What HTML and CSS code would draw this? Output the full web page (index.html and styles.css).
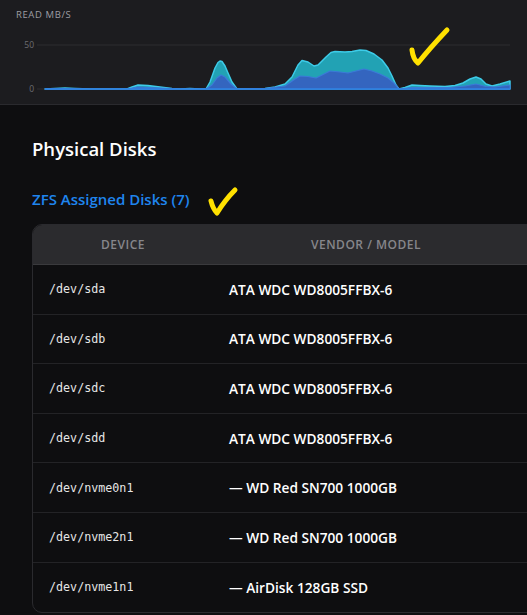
FILE: index.html
```html
<!DOCTYPE html>
<html lang="en">
<head>
    <meta charset="UTF-8">
    <meta name="viewport" content="width=device-width, initial-scale=1.0">
    <title>Physical Disks</title>
    <link rel="stylesheet" href="styles.css">
</head>
<body>
    <div class="chart-panel">
        <div class="chart-label">Read MB/s</div>
        <svg class="chart" viewBox="0 24 527 76" width="527" height="76">
            <line class="grid" x1="37" y1="45" x2="510" y2="45"/>
            <line class="grid" x1="37" y1="89" x2="45" y2="89"/>
            <text class="axis" x="34" y="48" text-anchor="end">50</text>
            <text class="axis" x="34" y="92" text-anchor="end">0</text>
            <!-- total -->
            <path class="area-total" d="M45,89 L55,88.5 L65,88 L75,88.5 L90,89 L127,89 L132,87 L138,85 L148,85.5 L160,87 L172,88.5 L180,89 L190,88.5 L200,89 L206,89 L210,82 L215,68 L218,62.5 L220,61 L222,61.5 L225,66 L228,73 L232,82 L237,89 L250,89 L265,88.5 L275,87 L285,84 L292,77 L298,65 L302,60.5 L308,62 L314,66 L318,65 L326,57 L331,52.5 L335,51.5 L345,52 L352,51.5 L360,50 L366,50.5 L374,54 L382,60 L388,68 L392,76 L396,85 L399,89 L405,87.5 L412,85 L420,85.5 L430,86 L445,86.5 L455,85.5 L463,83 L470,79 L476,77 L481,79 L486,84 L492,86 L500,84 L510,81 L510,89 Z"/>
            <!-- read -->
            <path class="area-read" d="M45,89 L60,88.5 L90,89 L127,89 L138,87 L160,88 L180,89 L206,89 L212,85 L217,78 L221,75 L225,77 L231,84 L237,89 L265,88.5 L285,86 L295,79 L300,76 L308,76.5 L316,78 L322,75 L330,71 L340,72 L348,73 L356,71 L364,69 L372,71 L380,74 L388,78 L394,83 L399,89 L412,87.5 L430,87.5 L450,87.5 L465,86 L476,84 L486,86.5 L495,87 L510,85 L510,89 Z"/>
            <line class="base" x1="45" y1="89" x2="510" y2="89"/>
        </svg>
    </div>

    <section class="disks">
        <h2>Physical Disks</h2>
        <h3>ZFS Assigned Disks (7)</h3>
        <div class="table-wrap">
            <table class="disk-table">
                <thead>
                    <tr>
                        <th class="col-device">Device</th>
                        <th class="col-model">Vendor / Model</th>
                        <th></th>
                    </tr>
                </thead>
                <tbody>
                    <tr><td class="dev">/dev/sda</td><td class="model">ATA WDC WD8005FFBX-6</td><td></td></tr>
                    <tr><td class="dev">/dev/sdb</td><td class="model">ATA WDC WD8005FFBX-6</td><td></td></tr>
                    <tr><td class="dev">/dev/sdc</td><td class="model">ATA WDC WD8005FFBX-6</td><td></td></tr>
                    <tr><td class="dev">/dev/sdd</td><td class="model">ATA WDC WD8005FFBX-6</td><td></td></tr>
                    <tr><td class="dev">/dev/nvme0n1</td><td class="model">— WD Red SN700 1000GB</td><td></td></tr>
                    <tr><td class="dev">/dev/nvme2n1</td><td class="model">— WD Red SN700 1000GB</td><td></td></tr>
                    <tr><td class="dev">/dev/nvme1n1</td><td class="model">— AirDisk 128GB SSD</td><td></td></tr>
                </tbody>
            </table>
        </div>
    </section>

    <!-- hand-drawn review marks -->
    <svg class="marks" viewBox="0 0 527 615" width="527" height="615">
        <path d="M412,50 Q413,59 418,63 Q430,48 447,30"/>
        <path d="M211,201 Q213,209 217,213 Q225,200 235,190"/>
    </svg>
</body>
</html>
```

FILE: styles.css
```css
* {
    margin: 0;
    padding: 0;
    box-sizing: border-box;
}

body {
    background-color: #0e0e10;
    color: #f2f2f2;
    font-family: "Open Sans", "Noto Sans", sans-serif;
    width: 527px;
    height: 615px;
    overflow: hidden;
    position: relative;
}

.chart-panel {
    height: 105px;
    background-color: #1c1c1f;
    border-bottom: 1px solid #2a2a2e;
}

.chart-label {
    padding: 9px 0 0 16px;
    height: 24px;
    font-size: 9.5px;
    line-height: 12px;
    letter-spacing: 0.6px;
    text-transform: uppercase;
    color: #9d9da3;
}

.chart {
    display: block;
}

.chart .grid {
    stroke: #2c2c30;
    stroke-width: 1;
}

.chart .axis {
    font-size: 8.5px;
    fill: #6c6c72;
    font-family: "Open Sans", sans-serif;
}

.area-total {
    fill: #22a2b4;
    stroke: #3dcbe8;
    stroke-width: 1.5;
    stroke-linejoin: round;
}

.area-read {
    fill: #3465bf;
    stroke: #3b7ad8;
    stroke-width: 1.2;
    stroke-linejoin: round;
}

.chart .base {
    stroke: #2f80e2;
    stroke-width: 1.5;
}

.disks {
    padding: 31px 0 0 32px;
}

h2 {
    font-size: 18.5px;
    font-weight: 600;
    line-height: 26px;
    color: #ffffff;
}

h3 {
    margin-top: 26px;
    font-size: 15px;
    font-weight: 600;
    line-height: 22px;
    color: #1f85ee;
}

.table-wrap {
    margin-top: 14px;
    width: 700px;
    border: 1px solid #2a2a2e;
    border-radius: 10px;
    overflow: hidden;
}

.disk-table {
    width: 100%;
    border-collapse: separate;
    border-spacing: 0;
}

.disk-table th {
    height: 40px;
    background-color: #2b2b2e;
    border-bottom: 1px solid #3a3a3d;
    font-size: 12px;
    font-weight: 600;
    letter-spacing: 0.5px;
    text-transform: uppercase;
    color: #86868b;
    text-align: center;
}

.col-device {
    width: 180px;
}

.col-model {
    width: 306px;
}

.disk-table td {
    height: 49.6px;
    padding: 0 16px;
    border-bottom: 1px solid #232326;
    vertical-align: middle;
}

.disk-table tr:last-child td {
    border-bottom: none;
}

.dev {
    font-family: "DejaVu Sans Mono", "Liberation Mono", monospace;
    font-size: 11.7px;
    color: #e6e6e6;
}

.model {
    font-size: 13.7px;
    font-weight: 600;
    color: #ffffff;
}

.marks {
    position: absolute;
    top: 0;
    left: 0;
    pointer-events: none;
}

.marks path {
    fill: none;
    stroke: #ffe100;
    stroke-width: 5;
    stroke-linecap: round;
    stroke-linejoin: round;
}
```
